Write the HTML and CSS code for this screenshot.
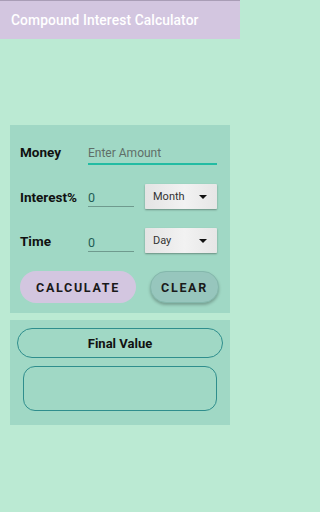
FILE: index.html
```html
<!DOCTYPE html>
<html>
<head>
<meta charset="utf-8">
<link rel="stylesheet" href="styles.css">
</head>
<body>
<div class="appbar"><span class="title">Compound Interest Calculator</span></div>
<div class="content">
  <div class="card form">
    <div class="row r1">
      <div class="label">Money</div>
      <div class="field wide"><span class="hint">Enter Amount</span></div>
    </div>
    <div class="row r2">
      <div class="label">Interest%</div>
      <div class="field short"><span class="val">0</span></div>
      <div class="spinner"><span>Month</span><i class="tri"></i></div>
    </div>
    <div class="row r3">
      <div class="label">Time</div>
      <div class="field short"><span class="val">0</span></div>
      <div class="spinner"><span>Day</span><i class="tri"></i></div>
    </div>
    <div class="buttons">
      <div class="btn calc">CALCULATE</div>
      <div class="btn clear">CLEAR</div>
    </div>
  </div>
  <div class="card result">
    <div class="final">Final Value</div>
    <div class="output"></div>
  </div>
</div>
</body>
</html>
```
FILE: styles.css
```css
html {
  background: #bbead3;
}
html, body {
  margin: 0;
  padding: 0;
}
body {
  background: #bbead3;
  font-family: Roboto, "Liberation Sans", sans-serif;
  width: 240px;
  height: 512px;
  overflow: hidden;
}
.appbar {
  height: 38px;
  border-top: 1px solid #a99db6;
  background: #d3c6e0;
  display: flex;
  align-items: center;
  padding-left: 11px;
}
.title {
  color: #ffffff;
  font-size: 13.8px;
  font-weight: 500;
  letter-spacing: 0.1px;
}
.content {
  padding: 86px 10px 0 10px;
  display: flex;
  flex-direction: column;
  gap: 7px;
}
.card {
  background: #a0d8c5;
}
.form {
  padding: 13px 10px 10px 10px;
  display: flex;
  flex-direction: column;
}
.row {
  display: flex;
  align-items: center;
}
.r1 { height: 28px; }
.r2 { height: 25px; margin-top: 18px; }
.r3 { height: 25px; margin-top: 19px; }
.label {
  width: 68px;
  font-size: 13.5px;
  font-weight: 700;
  color: #111;
}
.field {
  box-sizing: border-box;
}
.wide {
  width: 129px;
  border-bottom: 2px solid #22bca3;
  padding: 3px 0 2px 0;
  margin-top: 2px;
}
.short {
  width: 46px;
  border-bottom: 1px solid #6f9a8e;
  padding: 3px 0 0 0;
}
.r3 .short {
  margin-top: 3px;
}
.hint {
  display: block;
  font-size: 12px;
  line-height: 16px;
  color: #5f6e68;
}
.val {
  display: block;
  font-size: 12.5px;
  line-height: 16px;
  color: #1f5c55;
}
.spinner {
  margin-left: 11px;
  width: 72px;
  height: 25px;
  box-sizing: border-box;
  background: linear-gradient(90deg, #e4e4e4 0%, #f2f2f2 55%, #e6e6e6 100%);
  box-shadow: 0 1px 2px rgba(0, 0, 0, 0.35);
  border-radius: 1px;
  display: flex;
  align-items: center;
  justify-content: space-between;
  padding: 0 10px 0 8px;
  font-size: 11px;
  color: #333;
}
.tri {
  width: 0;
  height: 0;
  border-left: 4px solid transparent;
  border-right: 4px solid transparent;
  border-top: 4px solid #111;
}
.buttons {
  margin-top: 18px;
  display: flex;
  align-items: center;
  gap: 14px;
}
.btn {
  height: 32px;
  box-sizing: border-box;
  border-radius: 16px;
  display: flex;
  align-items: center;
  justify-content: center;
  font-size: 12.5px;
  font-weight: 700;
  letter-spacing: 1.7px;
  color: #1a1a1a;
}
.calc {
  width: 116px;
  background: #d3c6e0;
}
.clear {
  width: 69px;
  background: #97c6bd;
  border: 1.5px solid #84b8ac;
  box-shadow: 0 2px 3px rgba(0, 0, 0, 0.25);
}
.result {
  padding: 8px 7px 14px 7px;
  display: flex;
  flex-direction: column;
}
.final {
  height: 30px;
  box-sizing: border-box;
  border: 1.5px solid #2f8e8d;
  border-radius: 15px;
  display: flex;
  align-items: center;
  justify-content: center;
  font-size: 13px;
  font-weight: 700;
  color: #111;
}
.output {
  margin: 8px 6px 0 6px;
  height: 45px;
  box-sizing: border-box;
  border: 1.5px solid #2f8e8d;
  border-radius: 12px;
}
```
